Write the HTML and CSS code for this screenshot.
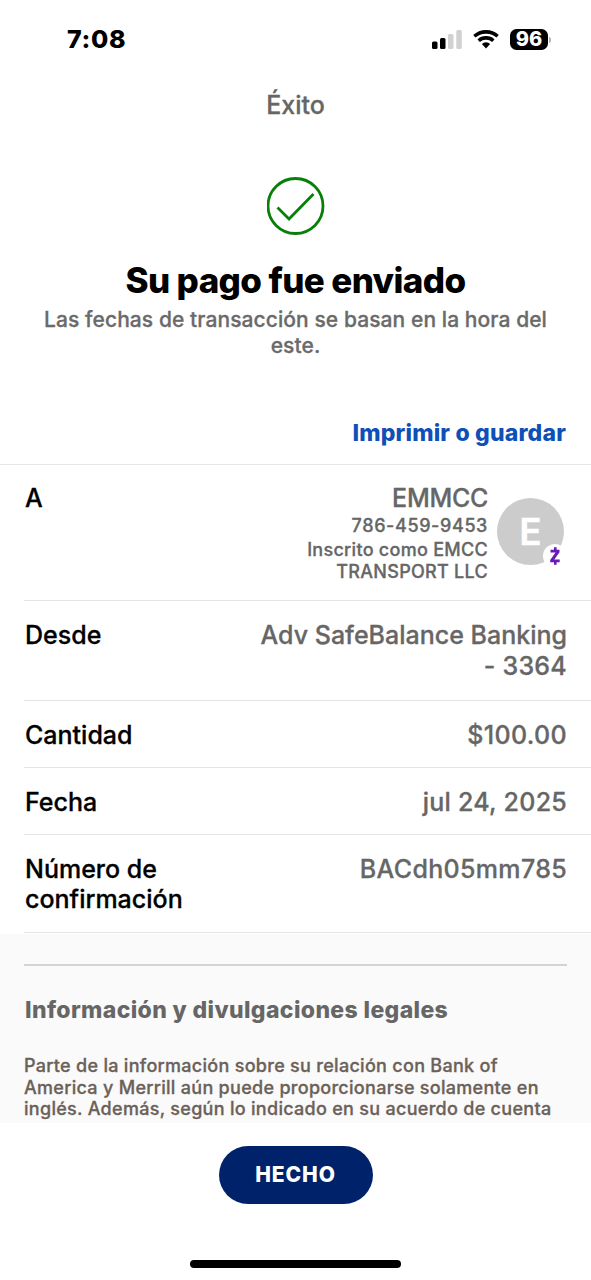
FILE: index.html
```html
<!DOCTYPE html>
<html lang="es">
<head>
<meta charset="utf-8">
<title>Éxito</title>
<link rel="stylesheet" href="styles.css">
</head>
<body>
<div class="screen">
  <header class="status">
    <span class="time">7:08</span>
    <div class="indicators">
      <svg class="signal" viewBox="0 0 30 19" width="30" height="19"><rect x="0" y="11.500" width="5.500" height="7.500" rx="1.500"/><rect x="8" y="8" width="5.500" height="11" rx="1.500"/><rect class="off" x="16" y="4" width="5.500" height="15" rx="1.500"/><rect class="off" x="24.300" y="0" width="5.500" height="19" rx="1.500"/></svg>
      <svg class="wifi" viewBox="0 0 26 19" width="26" height="19"><path d="M13 0C8.100 0 3.500 1.900.2 5.100L2.500 7.500A15.200 15.200 0 0 1 13 3.700 15.200 15.200 0 0 1 23.500 7.500L25.800 5.100A18.500 18.500 0 0 0 13 0Z"/><path d="M13 6.100A12 12 0 0 0 4.500 9.400L6.900 11.900A8.800 8.800 0 0 1 13 9.800 8.800 8.800 0 0 1 19.100 11.900L21.500 9.400A12 12 0 0 0 13 6.100Z"/><path d="M13 12.300A6 6 0 0 0 8.900 14.100L13 18.600 17.100 14.100A6 6 0 0 0 13 12.300Z"/></svg>
      <div class="battery"><span>96</span></div><i class="battery-tip"></i>
    </div>
  </header>
  <h1 class="title"><span>Éxito</span></h1>
  <svg class="check" viewBox="0 0 58 58" width="58" height="58"><circle cx="28.500" cy="29" r="27.500"/><path d="M10.500 30.500 22 42 46.500 17"/></svg>
  <h2 class="headline"><span>Su pago fue enviado</span></h2>
  <p class="note"><span>Las fechas de transacción se basan en la hora del</span><br><span>este.</span></p>
  <div class="print"><a>Imprimir o guardar</a></div>

  <main class="details">
    <section class="row recipient">
      <span class="label">A</span>
      <div class="payee">
        <span class="name">EMMCC</span>
        <span class="phone">786-459-9453</span>
        <span class="registered">Inscrito como EMCC</span>
        <span class="company">TRANSPORT LLC</span>
      </div>
      <div class="avatar"><span>E</span>
        <svg class="zelle" viewBox="0 0 24 24" width="24" height="24"><circle cx="12" cy="12" r="12"/><path class="stem" d="M12.300 3.300V7M12.300 17v3.700"/><path class="z" d="M7.500 5.700H16.500V8.300L11.300 15.500H16.700V18.300H7.200V15.900L12.500 8.500H7.500Z"/></svg>
      </div>
    </section>
    <section class="row from"><span class="label">Desde</span><div class="value"><span>Adv SafeBalance Banking</span><br><span class="digits">- 3364</span></div></section>
    <section class="row amount"><span class="label">Cantidad</span><span class="value money">$100.00</span></section>
    <section class="row date"><span class="label">Fecha</span><span class="value day">jul 24, 2025</span></section>
    <section class="row confirmation"><div class="label"><span>Número de</span><br><span>confirmación</span></div><span class="value code">BACdh05mm785</span></section>
  </main>

  <section class="legal">
    <h3><span>Información y divulgaciones legales</span></h3>
    <p><span>Parte de la información sobre su relación con Bank of</span><br><span>America y Merrill aún puede proporcionarse solamente en</span><br><span>inglés. Además, según lo indicado en su acuerdo de cuenta</span></p>
  </section>
  <footer class="footer">
    <button class="done"><span>HECHO</span></button>
    <div class="home"></div>
  </footer>
</div>
</body>
</html>
```
FILE: styles.css
```css
*{box-sizing:border-box}
body{margin:0;background:#fff;font-family:Inter,"Liberation Sans",sans-serif;color:#000}
h1,h2,h3,p{margin:0}
.screen{width:591px;height:1280px;overflow:hidden;display:flex;flex-direction:column;background:#fff}
.status{height:80px;flex:none;display:flex;justify-content:space-between;align-items:flex-start;padding:24px 40px 0 67px}
.time{font-size:25px;line-height:31px;font-weight:800;letter-spacing:.7px}
.indicators{display:flex;align-items:center;height:31px}
.off{fill:#d1d1d1}
.wifi{margin-left:11px}
.battery{margin-left:11px;width:38px;height:21px;border-radius:6.500px;background:#000;color:#fff;font-size:20px;line-height:21px;font-weight:800;text-align:center}
.battery-tip{width:2px;height:6px;margin-left:1px;border-radius:0 2px 2px 0;background:#b5b5b5}
.title,.note,.row,.legal p{-webkit-text-stroke:.3px currentColor}
.title{height:50px;line-height:50px;font-size:25px;font-weight:500;color:#666;text-align:center}
.check{flex:none;margin:47px auto 0;fill:none;stroke:#087f08;stroke-width:2.800}
.headline{margin-top:25px;height:40px;line-height:40px;font-size:35px;font-weight:800;letter-spacing:-.62px;text-align:center}
.note{margin-top:7px;line-height:26px;font-size:21px;font-weight:500;letter-spacing:.08px;color:#6a6a6a;text-align:center}
.print{height:106px;padding:58px 25px 0 0;line-height:32px;text-align:right;border-bottom:1px solid #e6e6e6}
.print a{font-size:23px;font-weight:800;letter-spacing:.18px;color:#0f4fb8}
.details{flex:none;background:#fff}
.row{display:flex;justify-content:space-between;align-items:flex-start;margin-left:24px;padding:19px 24px 0 1px;border-bottom:1px solid #e4e4e4;font-size:25px;line-height:30px;font-weight:500}
.value,.payee{text-align:right;color:#666}
.recipient{height:136px;padding-top:18px}
.recipient .label{flex:1}
.payee{display:flex;flex-direction:column;align-items:flex-end;font-size:18px;letter-spacing:.28px}
.name{font-size:25px;line-height:30px;letter-spacing:-.3px}
.phone{line-height:25px;letter-spacing:.6px}
.registered{line-height:22px;margin-top:1px}
.company{line-height:21px}
.avatar{position:relative;width:67px;height:67px;margin:15px 3px 0 9px;border-radius:50%;background:#ccc;color:#fff;font-size:37px;line-height:67px;font-weight:600;text-align:center}
.zelle{position:absolute;left:45.500px;top:45.500px}
.zelle circle{fill:#fff}
.stem{fill:none;stroke:#661bb5;stroke-width:2.600}
.z{fill:#661bb5}
.from{height:100px}
.from .value{line-height:30.500px}
.digits{letter-spacing:.25px}
.money{letter-spacing:.35px}
.day{letter-spacing:.25px}
.code{letter-spacing:.33px}
.amount,.date{height:67px}
.confirmation{height:98px}
.legal{flex:none;height:189px;padding:30px 24px 0;background:#fafafa;margin-top:1px}
.legal h3{height:60px;border-top:2px solid #d3d3d3;padding:29px 0 0 1px;font-size:23px;line-height:30px;font-weight:800;letter-spacing:.37px;color:#666}
.legal p{margin-top:31px;font-size:18px;line-height:21.700px;font-weight:500;letter-spacing:.29px;color:#6b6158;white-space:nowrap}
.footer{flex:1;display:flex;flex-direction:column;align-items:center;padding-top:23px;background:#fff}
.done{width:154px;height:58px;border:0;border-radius:29px;background:#00226b;color:#fff;font:800 21px/58px Inter,sans-serif;letter-spacing:.9px;padding:0}
.home{width:211px;height:8px;border-radius:4px;background:#000;margin-top:56px}
```
